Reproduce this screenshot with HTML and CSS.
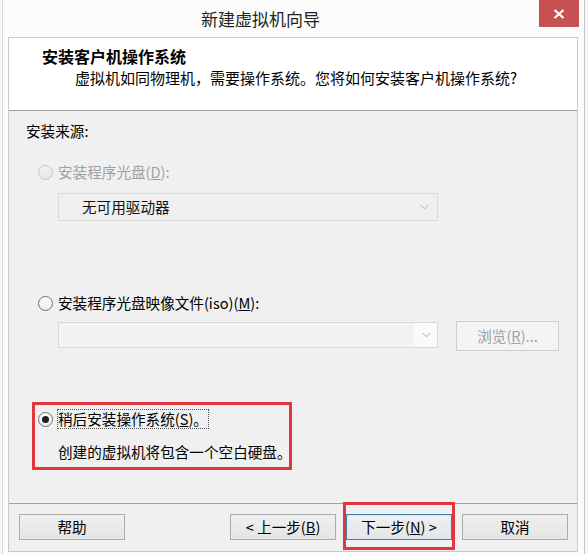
FILE: index.html
```html
<!DOCTYPE html>
<html lang="zh-CN">
<head>
<meta charset="utf-8">
<title>新建虚拟机向导</title>
<link rel="stylesheet" href="styles.css">
</head>
<body>
<div class="window">
  <div class="titlebar">
    <div class="title">新建虚拟机向导</div>
    <div class="close">
      <svg width="12" height="10" viewBox="0 0 12 10"><path d="M1.5 1 L10.5 9 M10.5 1 L1.5 9" stroke="#fff" stroke-width="2.2" fill="none"/></svg>
    </div>
  </div>
  <div class="client">
    <div class="header">
      <div class="h-title">安装客户机操作系统</div>
      <div class="h-sub">虚拟机如同物理机，需要操作系统。您将如何安装客户机操作系统?</div>
    </div>
    <div class="content">
      <div class="label">安装来源:</div>
      <div class="radio-row disabled r1"><span class="radio"></span><span class="rtext">安装程序光盘(<u>D</u>):</span></div>
      <div class="select disabled">
        <span class="select-text">无可用驱动器</span>
        <svg class="chev" width="9" height="6" viewBox="0 0 9 6"><path d="M0.5 0.8 L4.5 4.8 L8.5 0.8" stroke="#b4b4b4" stroke-width="1" fill="none"/></svg>
      </div>
      <div class="radio-row r2"><span class="radio"></span><span class="rtext">安装程序光盘映像文件(iso)(<u>M</u>):</span></div>
      <div class="iso-row">
        <div class="combo">
          <div class="combo-field"></div>
          <div class="combo-btn"><svg width="9" height="6" viewBox="0 0 9 6"><path d="M0.5 0.8 L4.5 4.8 L8.5 0.8" stroke="#a8a8a8" stroke-width="1" fill="none"/></svg></div>
        </div>
        <div class="btn btn-disabled browse">浏览(<u>R</u>)...</div>
      </div>
      <div class="radio-row r3"><span class="radio checked"><span class="dot"></span></span><span class="rtext focus">稍后安装操作系统(<u>S</u>)。</span></div>
      <div class="desc">创建的虚拟机将包含一个空白硬盘。</div>
      <div class="mark mark-later"></div>
    </div>
    <div class="footer">
      <div class="btn">帮助</div>
      <div class="spacer"></div>
      <div class="btn">&lt; 上一步(<u>B</u>)</div>
      <div class="btn btn-default">下一步(<u>N</u>) &gt;</div>
      <div class="btn">取消</div>
      <div class="mark mark-next"></div>
    </div>
  </div>
</div>
</body>
</html>
```

FILE: styles.css
```css
* { box-sizing: border-box; }
html, body {
  margin: 0;
  padding: 0;
  width: 588px;
  height: 554px;
  overflow: hidden;
  background: #f6f6f6;
  font-family: "Noto Sans CJK SC", "Noto Sans", sans-serif;
  color: #000;
}
.window {
  width: 583px;
  height: 554px;
  margin-left: 2px;
  background: #fcfcfc;
  border-left: 1px solid #d6d6d6;
  border-right: 1px solid #c4c4c4;
  display: flex;
  flex-direction: column;
}
.titlebar {
  height: 37px;
  display: flex;
  align-items: flex-start;
}
.title {
  flex: 1;
  text-align: center;
  padding-right: 21px;
  font-size: 17px;
  line-height: 37px;
  color: #222;
}
.close {
  width: 40px;
  height: 27px;
  margin-right: 5px;
  background: #c75050;
  display: flex;
  align-items: center;
  justify-content: center;
}
.close svg { display: block; margin-top: 0px; }
.client {
  margin: 0 6px 0 5px;
  height: 515px;
  border: 1px solid #c9c9c9;
  display: flex;
  flex-direction: column;
  position: relative;
}
.header {
  height: 73px;
  background: #fff;
  border-bottom: 1px solid #a0a0a0;
  padding: 8px 0 0 33px;
}
.h-title {
  font-size: 16px;
  font-weight: bold;
  line-height: 21px;
}
.h-sub {
  font-size: 15px;
  line-height: 22px;
  padding-left: 33px;
}
.content {
  height: 392px;
  background: #f0f0f0;
  padding: 10px 0 0 17px;
  font-size: 14.6px;
  position: relative;
}
.label { line-height: 20px; }
.radio-row {
  display: flex;
  align-items: center;
  height: 20px;
  padding-left: 12px;
}
.radio-row.r1 { margin-top: 21px; }
.radio-row.r2 { margin-top: 72px; }
.radio-row.r3 { margin-top: 58px; }
.radio {
  width: 15px;
  height: 15px;
  border-radius: 50%;
  border: 1px solid #6f6f6f;
  background: linear-gradient(#fdfdfd, #ececec);
  display: flex;
  align-items: center;
  justify-content: center;
  flex: none;
}
.radio .dot {
  width: 7px;
  height: 7px;
  border-radius: 50%;
  background: #1e1e1e;
}
.rtext {
  margin-left: 5px;
  line-height: 20px;
  white-space: nowrap;
}
.disabled .radio {
  border-color: #c5c5c5;
  background: linear-gradient(#f2f2f2, #e6e6e6);
}
.disabled .rtext { color: #a0a0a0; }
.focus {
  margin-left: 4px;
  padding: 0 1px;
  outline: 1px dotted #555;
  outline-offset: -1px;
}
.select {
  margin: 11px 0 0 32px;
  width: 380px;
  height: 28px;
  border: 1px solid #d9d9d9;
  background: #efefef;
  display: flex;
  align-items: center;
  justify-content: space-between;
  padding: 0 8px 0 23px;
}
.select-text { color: #111; line-height: 20px; }
.iso-row {
  margin: 8px 0 0 32px;
  height: 30px;
  display: flex;
  align-items: flex-start;
}
.combo {
  margin-top: 1px;
  width: 380px;
  height: 26px;
  border: 1px solid #d9d9d9;
  display: flex;
  background: #efefef;
}
.combo-field {
  flex: 1;
  margin: 1px 0 1px 1px;
  background: #f2f2f2;
  border: 1px solid #fafafa;
}
.combo-btn {
  width: 22px;
  background: #fafafa;
  display: flex;
  align-items: center;
  justify-content: center;
}
.btn {
  width: 106px;
  height: 26px;
  border: 1px solid #acacac;
  background: linear-gradient(#f0f0f0, #e5e5e5);
  display: flex;
  align-items: center;
  justify-content: center;
  font-size: 14.6px;
  line-height: 20px;
  color: #000;
  white-space: nowrap;
}
.browse {
  margin-left: 18px;
  width: 103px;
  height: 30px;
}
.btn-disabled {
  border: 1px solid #cfcfcf;
  background: #f4f4f4;
  color: #a0a0a0;
}
.btn-default {
  border-color: #3c7fb1;
  box-shadow: inset 0 0 0 1px #d6e8f7;
}
.desc {
  margin: 13px 0 0 32px;
  line-height: 20px;
}
.footer {
  flex: 1;
  border-top: 1px solid #a0a0a0;
  background: #f0f0f0;
  display: flex;
  align-items: flex-start;
  padding: 10px 9px 0 10px;
  gap: 10px;
  position: relative;
}
.spacer { flex: 1; }
.mark {
  position: absolute;
  border: 3px solid #e2363c;
}
.mark-later {
  left: 23px;
  top: 291px;
  width: 260px;
  height: 68px;
}
.mark-next {
  left: 334px;
  top: -2px;
  width: 112px;
  height: 48px;
}
```
